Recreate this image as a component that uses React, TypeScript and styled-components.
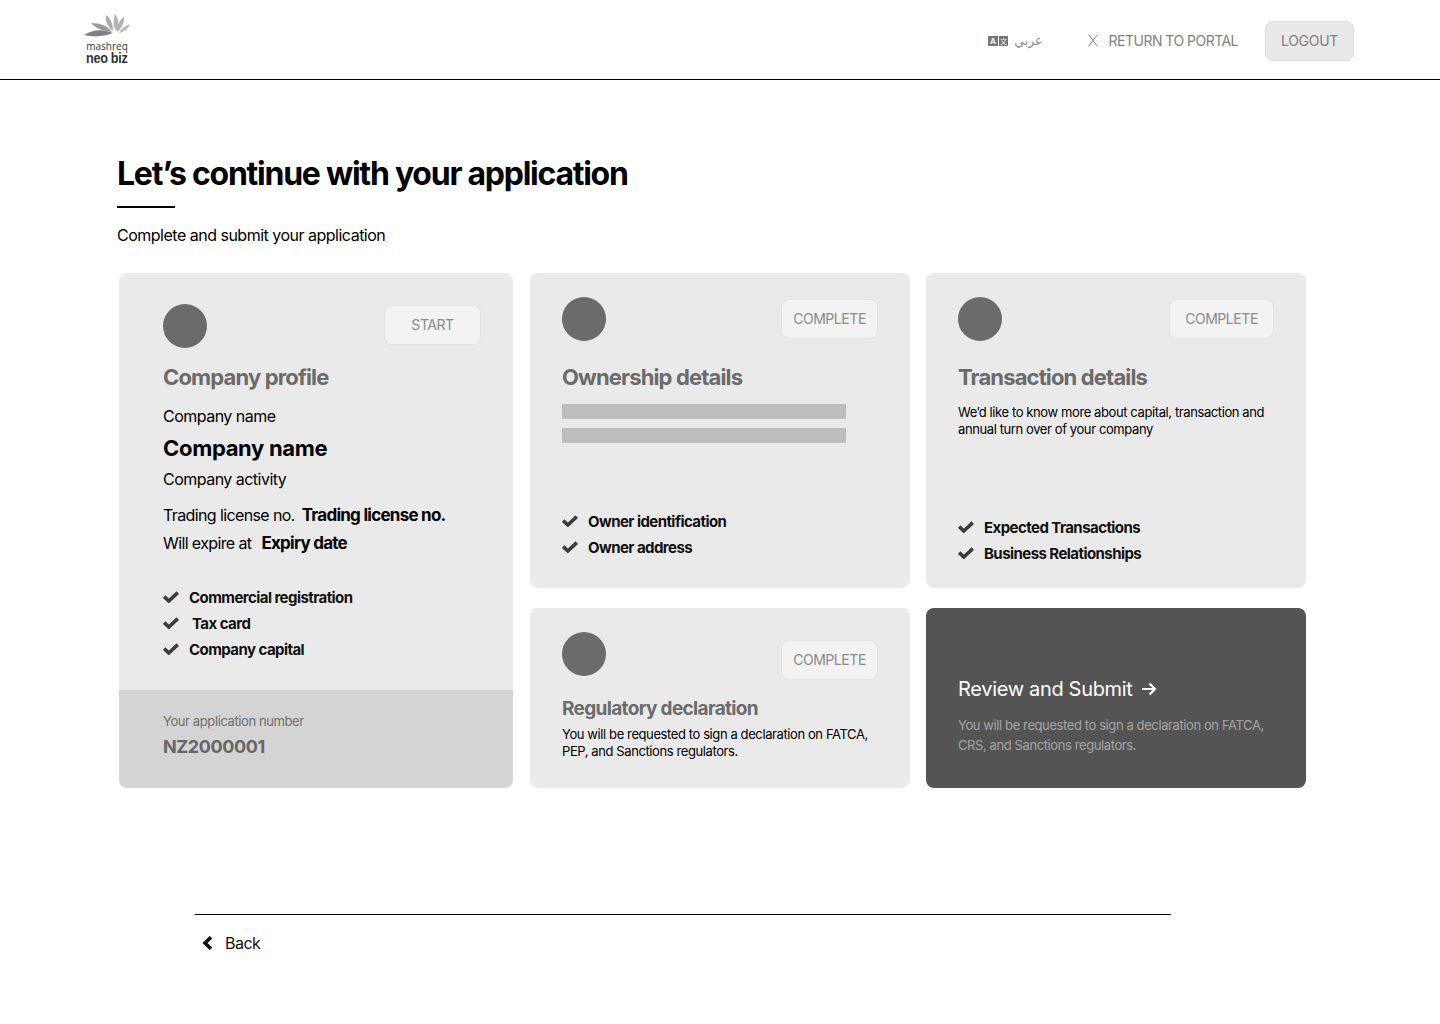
import React from "react";
import styled, { createGlobalStyle } from "styled-components";

const Global = createGlobalStyle`
  html, body { margin: 0; padding: 0; background: #fff; }
  body { font-family: Inter, "Noto Sans", sans-serif; color: #000; width: 1440px; height: 1024px; overflow: hidden; }
  * { box-sizing: border-box; }
`;

const Page = styled.div`
  width: 1440px;
  height: 1024px;
  display: flex;
  flex-direction: column;
`;

const Header = styled.header`
  height: 80px;
  border-bottom: 1px solid #000;
  display: flex;
  align-items: center;
  justify-content: space-between;
  padding: 2px 86px 0 83px;
`;

const Logo = styled.div`
  width: 48px;
  height: 56px;
  display: flex;
  flex-direction: column;
  align-items: center;
`;

const LogoName = styled.span`
  font-family: "Open Sans", sans-serif;
  font-size: 10px;
  line-height: 11px;
  color: #333;
  margin-top: 1px;
`;

const LogoSub = styled.span`
  font-family: "Liberation Sans", sans-serif;
  font-size: 15px;
  line-height: 11px;
  font-weight: 700;
  color: #333;
  transform: scaleX(0.84);
  white-space: nowrap;
  letter-spacing: -0.3px;
`;

const HeaderActions = styled.nav`
  display: flex;
  align-items: center;
`;

const LangLink = styled.a`
  display: flex;
  align-items: center;
  gap: 6px;
  color: #8c8c8c;
  font-size: 12.5px;
  font-family: "DejaVu Sans", sans-serif;
  margin-right: 45px;
`;

const ReturnLink = styled.a`
  display: flex;
  align-items: center;
  gap: 11px;
  color: #808080;
  font-size: 14px;
  line-height: 20px;
  letter-spacing: -0.52px;
  margin-right: 27px;
`;

const LogoutButton = styled.button`
  width: 89px;
  height: 40px;
  background: #e9e9e9;
  border: 1px solid #dcdcdc;
  border-radius: 8px;
  color: #808080;
  font: 400 14px Inter, sans-serif;
  letter-spacing: -0.3px;
  padding: 0;
`;

const Main = styled.main`
  padding: 76px 0 0 117px;
  flex: 1;
  display: flex;
  flex-direction: column;
`;

const Title = styled.h1`
  margin: 0;
  font-size: 32px;
  line-height: 36px;
  font-weight: 700;
  letter-spacing: -1.25px;
`;

const TitleRule = styled.div`
  width: 58px;
  height: 2px;
  background: #000;
  margin-top: 14px;
`;

const Subtitle = styled.p`
  margin: 17px 0 0;
  font-size: 16px;
  line-height: 20px;
  letter-spacing: -0.5px;
`;

const Grid = styled.div`
  margin: 28px 0 0 2px;
  display: grid;
  grid-template-columns: 395px 380px 380px;
  grid-template-rows: 315px 180px;
  column-gap: 16px;
  row-gap: 20px;
  width: 1187px;
`;

const ProfileCard = styled.section`
  grid-row: 1 / span 2;
  width: 394px;
  background: #eaeaea;
  border-radius: 8px;
  overflow: hidden;
  display: flex;
  flex-direction: column;
`;

const ProfileBody = styled.div`
  flex: 1;
  padding: 31px 32px 0 44px;
`;

const CardTop = styled.div`
  display: flex;
  justify-content: space-between;
`;

const Dot = styled.div`
  width: 44px;
  height: 44px;
  border-radius: 50%;
  background: #6b6b6b;
  flex: none;
`;

const StatusTag = styled.div<{ $w: number; $mt: number }>`
  width: ${(p) => p.$w}px;
  height: 40px;
  margin-top: ${(p) => p.$mt}px;
  padding-bottom: 1px;
  background: #f3f3f3;
  border: 1px solid #e2e2e2;
  border-radius: 8px;
  display: flex;
  align-items: center;
  justify-content: center;
  color: #8a8a8a;
  font-size: 14px;
  letter-spacing: -0.45px;
`;

const CardTitle = styled.h2<{ $mt?: number }>`
  margin: ${(p) => p.$mt ?? 22}px 0 0;
  font-size: 22px;
  line-height: 28px;
  font-weight: 700;
  color: #6b6b6b;
  letter-spacing: -0.85px;
`;

const PlainLine = styled.div<{ $mt?: number }>`
  font-size: 16px;
  line-height: 20px;
  letter-spacing: -0.52px;
  margin-top: ${(p) => p.$mt ?? 0}px;
`;

const CompanyName = styled.div`
  font-size: 22px;
  line-height: 28px;
  font-weight: 700;
  letter-spacing: -0.32px;
  margin: 8px 0 7px;
`;

const Pair = styled.div<{ $mt: number; $gap: number }>`
  display: flex;
  gap: ${(p) => p.$gap}px;
  font-size: 16px;
  line-height: 20px;
  letter-spacing: -0.62px;
  margin-top: ${(p) => p.$mt}px;
`;

const Strong = styled.strong`
  font-size: 17px;
  font-weight: 700;
  letter-spacing: -0.74px;
`;

const Checks = styled.ul<{ $mt: number }>`
  list-style: none;
  margin: ${(p) => p.$mt}px 0 0;
  padding: 0;
  display: flex;
  flex-direction: column;
  gap: 6px;
`;

const CheckItem = styled.li<{ $gap?: number }>`
  display: flex;
  align-items: center;
  gap: ${(p) => p.$gap ?? 10}px;
  height: 20px;
  font-size: 15px;
  font-weight: 700;
  letter-spacing: -0.56px;
  color: #111;
`;

const AppNumberBar = styled.div`
  height: 98px;
  background: #d4d4d4;
  padding: 22px 44px 0;
`;

const AppNumberLabel = styled.div`
  font-size: 13px;
  line-height: 18px;
  color: #6e6e6e;
  letter-spacing: -0.4px;
`;

const AppNumber = styled.div`
  font-size: 18px;
  line-height: 24px;
  font-weight: 700;
  color: #666;
  margin-top: 5px;
  letter-spacing: -0.4px;
`;

const Card = styled.section`
  background: #eaeaea;
  border-radius: 8px;
  padding: 24px 32px 0;
`;

const Bars = styled.div`
  display: flex;
  flex-direction: column;
  gap: 9px;
  margin-top: 13px;
`;

const Bar = styled.div`
  width: 284px;
  height: 15px;
  background: #bdbdbd;
`;

const Description = styled.p<{ $mt: number }>`
  margin: ${(p) => p.$mt}px 0 0;
  font-size: 13px;
  line-height: 17px;
  letter-spacing: -0.4px;
`;

const RegTitle = styled(CardTitle)`
  font-size: 19px;
  line-height: 24px;
  letter-spacing: -0.67px;
`;

const SubmitCard = styled.section`
  background: #545454;
  border-radius: 8px;
  padding: 67px 32px 0;
`;

const SubmitTitle = styled.div`
  display: flex;
  align-items: center;
  gap: 8px;
  color: #fff;
  font-size: 20px;
  line-height: 28px;
  letter-spacing: -0.32px;
`;

const SubmitText = styled.p`
  margin: 12px 0 0;
  color: #a4a4a4;
  font-size: 13px;
  line-height: 20px;
  letter-spacing: -0.4px;
`;

const Footer = styled.footer`
  margin: 126px 0 0 78px;
  width: 976px;
  border-top: 1px solid #000;
  padding: 18px 0 0 7px;
`;

const BackLink = styled.a`
  display: flex;
  align-items: center;
  gap: 12px;
  font-size: 16px;
  line-height: 20px;
  letter-spacing: -0.5px;
  color: #111;
`;

const Check = () => (
  <svg width="16" height="12" viewBox="0 0 16 12" fill="none">
    <path d="M1.2 5.6 L5.8 10 L14.8 1.6" stroke="#3c3c3c" strokeWidth="3.6" />
  </svg>
);

const Leaves = () => (
  <svg width="48" height="27" viewBox="0 0 48 27">
    <path d="M1 22 C10 16 20 16 30 20 C20 24 10 24 1 22Z" fill="#808080" />
    <path d="M8 10 C17 10 25 13 29 19 C21 18 13 16 8 10Z" fill="#999" />
    <path d="M23 2 C28 6 30 12 30 18 C25 14 22 8 23 2Z" fill="#aaa" />
    <path d="M32 1 C36 6 36 12 33 18 C30 13 30 7 32 1Z" fill="#b4b4b4" />
    <path d="M41 4 C41 10 39 15 34 19 C33 13 36 8 41 4Z" fill="#b0b0b0" />
    <path d="M47 11 C45 16 41 19 36 20 C38 15 42 13 47 11Z" fill="#bcbcbc" />
  </svg>
);

const TranslateIcon = () => (
  <svg width="20" height="10" viewBox="0 0 20 10">
    <rect width="10" height="10" fill="#777" />
    <rect x="11" width="9" height="10" fill="#777" />
    <text x="5" y="8" fontSize="8" fontWeight="700" textAnchor="middle" fill="#eee" fontFamily="Inter">A</text>
    <text x="15.5" y="8" fontSize="7" textAnchor="middle" fill="#eee" fontFamily="Noto Sans CJK SC">文</text>
  </svg>
);

const CloseIcon = () => (
  <svg width="10" height="13" viewBox="0 0 10 13" fill="none">
    <path d="M0.5 0.5 L9.5 12.5 M9.5 0.5 L0.5 12.5" stroke="#808080" strokeWidth="1" />
  </svg>
);

const ArrowIcon = () => (
  <svg width="16" height="14" viewBox="0 0 16 14" fill="none">
    <path d="M1 7 H14 M8.5 1.5 L14 7 L8.5 12.5" stroke="#fff" strokeWidth="2.2" />
  </svg>
);

const ChevronLeft = () => (
  <svg width="11" height="14" viewBox="0 0 11 14" fill="none">
    <path d="M9 1.2 L3 7 L9 12.8" stroke="#111" strokeWidth="3.6" />
  </svg>
);

export default function App() {
  return (
    <Page>
      <Global />
      <Header>
        <Logo>
          <Leaves />
          <LogoName>mashreq</LogoName>
          <LogoSub>neo biz</LogoSub>
        </Logo>
        <HeaderActions>
          <LangLink>
            <TranslateIcon />
            <span dir="rtl">عربي</span>
          </LangLink>
          <ReturnLink>
            <CloseIcon />
            RETURN TO PORTAL
          </ReturnLink>
          <LogoutButton>LOGOUT</LogoutButton>
        </HeaderActions>
      </Header>
      <Main>
        <Title>Let’s continue with your application</Title>
        <TitleRule />
        <Subtitle>Complete and submit your application</Subtitle>
        <Grid>
          <ProfileCard>
            <ProfileBody>
              <CardTop>
                <Dot />
                <StatusTag $w={97} $mt={1}>START</StatusTag>
              </CardTop>
              <CardTitle $mt={15}>Company profile</CardTitle>
              <PlainLine $mt={15}>Company name</PlainLine>
              <CompanyName>Company name</CompanyName>
              <PlainLine>Company activity</PlainLine>
              <Pair $mt={16} $gap={7}>
                Trading license no. <Strong>Trading license no.</Strong>
              </Pair>
              <Pair $mt={8} $gap={10}>
                Will expire at <Strong>Expiry date</Strong>
              </Pair>
              <Checks $mt={34}>
                <CheckItem><Check />Commercial registration</CheckItem>
                <CheckItem $gap={13}><Check />Tax card</CheckItem>
                <CheckItem><Check />Company capital</CheckItem>
              </Checks>
            </ProfileBody>
            <AppNumberBar>
              <AppNumberLabel>Your application number</AppNumberLabel>
              <AppNumber>NZ2000001</AppNumber>
            </AppNumberBar>
          </ProfileCard>

          <Card>
            <CardTop>
              <Dot />
              <StatusTag $w={97} $mt={2}>COMPLETE</StatusTag>
            </CardTop>
            <CardTitle>Ownership details</CardTitle>
            <Bars>
              <Bar />
              <Bar />
            </Bars>
            <Checks $mt={68}>
              <CheckItem><Check />Owner identification</CheckItem>
              <CheckItem><Check />Owner address</CheckItem>
            </Checks>
          </Card>

          <Card>
            <CardTop>
              <Dot />
              <StatusTag $w={105} $mt={2}>COMPLETE</StatusTag>
            </CardTop>
            <CardTitle>Transaction details</CardTitle>
            <Description $mt={13}>
              We’d like to know more about capital, transaction and
              <br />
              annual turn over of your company
            </Description>
            <Checks $mt={79}>
              <CheckItem><Check />Expected Transactions</CheckItem>
              <CheckItem><Check />Business Relationships</CheckItem>
            </Checks>
          </Card>

          <Card>
            <CardTop>
              <Dot />
              <StatusTag $w={97} $mt={8}>COMPLETE</StatusTag>
            </CardTop>
            <RegTitle $mt={17}>Regulatory declaration</RegTitle>
            <Description $mt={5}>
              You will be requested to sign a declaration on FATCA,
              <br />
              PEP, and Sanctions regulators.
            </Description>
          </Card>

          <SubmitCard>
            <SubmitTitle>
              Review and Submit <ArrowIcon />
            </SubmitTitle>
            <SubmitText>
              You will be requested to sign a declaration on FATCA,
              <br />
              CRS, and Sanctions regulators.
            </SubmitText>
          </SubmitCard>
        </Grid>
        <Footer>
          <BackLink>
            <ChevronLeft />
            Back
          </BackLink>
        </Footer>
      </Main>
    </Page>
  );
}
